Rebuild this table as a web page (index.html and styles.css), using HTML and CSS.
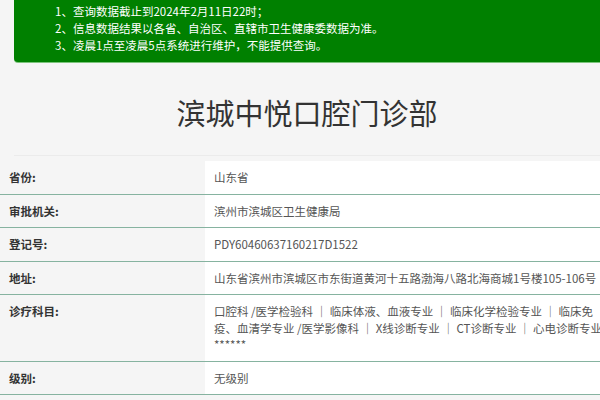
FILE: index.html
```html
<!DOCTYPE html>
<html lang="zh-CN">
<head>
<meta charset="utf-8">
<title>滨城中悦口腔门诊部</title>
<link rel="stylesheet" href="styles.css">
</head>
<body>
<div class="page">
  <div class="notice">
    <p>1、查询数据截止到2024年2月11日22时；</p>
    <p>2、信息数据结果以各省、自治区、直辖市卫生健康委数据为准。</p>
    <p>3、凌晨1点至凌晨5点系统进行维护，不能提供查询。</p>
  </div>
  <h1 class="title">滨城中悦口腔门诊部</h1>
</div>
<table class="info">
  <tr><th>省份:</th><td>山东省</td></tr>
  <tr><th>审批机关:</th><td>滨州市滨城区卫生健康局</td></tr>
  <tr><th>登记号:</th><td>PDY60460637160217D1522</td></tr>
  <tr><th>地址:</th><td class="nowrap">山东省滨州市滨城区市东街道黄河十五路渤海八路北海商城1号楼105-106号</td></tr>
  <tr><th>诊疗科目:</th><td>口腔科 /医学检验科 ｜ 临床体液、血液专业 ｜ 临床化学检验专业 ｜ 临床免疫、血清学专业 /医学影像科 ｜ X线诊断专业 ｜ CT诊断专业 ｜ 心电诊断专业 ******</td></tr>
  <tr><th>级别:</th><td>无级别</td></tr>
</table>
</body>
</html>
```

FILE: styles.css
```css
html, body {
  margin: 0;
  padding: 0;
}
body {
  background: #f5f5f5;
  font-family: "Noto Sans CJK SC", "Noto Sans", sans-serif;
  overflow: hidden;
  width: 600px;
  height: 400px;
}
.page {
  padding-left: 14px;
  margin-right: -20px;
}
.notice {
  background: #008000;
  color: #fff;
  font-size: 11.5px;
  line-height: 17px;
  padding: 3px 0 8px 41px;
  border-radius: 0 0 4px 4px;
  box-shadow: 0 1px 0 #7cc47c;
}
.notice p {
  margin: 0;
}
.title {
  margin: 30px 20px 0 0;
  padding-bottom: 23px;
  font-size: 29px;
  line-height: 40px;
  font-weight: normal;
  color: #333;
  text-align: center;
  border-bottom: 1px solid #ebebeb;
}
.info {
  margin-top: 5px;
  width: 614px;
  border-collapse: collapse;
  font-size: 11.5px;
  line-height: 16.5px;
  table-layout: fixed;
}
.info th {
  width: 196px;
  text-align: left;
  vertical-align: top;
  font-weight: bold;
  color: #333;
  padding: 8px 0 8px 9px;
  border-bottom: 1px solid #86b3a0;
}
.info td {
  background: #fff;
  color: #555;
  vertical-align: top;
  padding: 8px 10px 8px 9px;
  border-bottom: 1px solid #86b3a0;
}
.info .nowrap {
  white-space: nowrap;
}
```
